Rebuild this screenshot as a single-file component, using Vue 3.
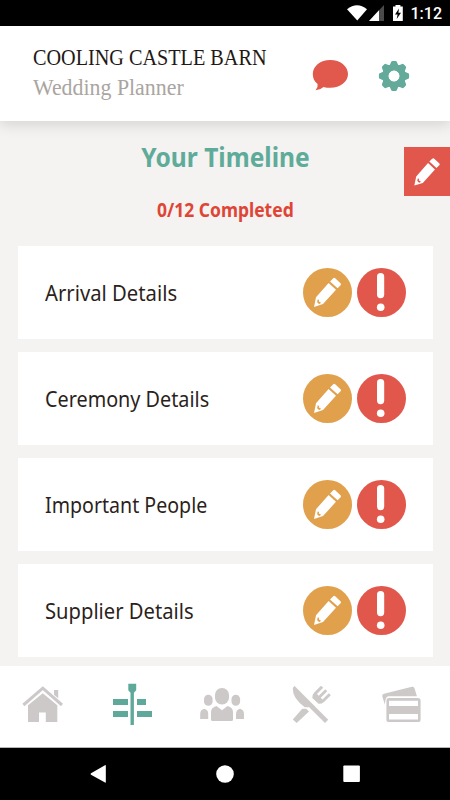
<script setup>
const tasks = [
  { name: 'Arrival Details', stretch: 0.921 },
  { name: 'Ceremony Details', stretch: 0.9 },
  { name: 'Important People', stretch: 0.891 },
  { name: 'Supplier Details', stretch: 0.918 },
]
const teeth = [0, 45, 90, 135, 180, 225, 270, 315]
</script>

<template>
  <div class="screen">
    <svg class="defs" width="0" height="0" aria-hidden="true">
      <symbol id="pencil" viewBox="0 0 49 49">
        <path fill="#fff" d="M30 10.5Q31 9.2 32.2 10.3L37.5 15.2Q38.7 16.3 37.6 17.3L34.6 20.3L27 13.4Z" />
        <path fill="#fff" fill-rule="evenodd" d="M25.6 14.9L33 21.8L20 36.1L11 39L13 29.2ZM14.6 31.5L14.2 34.2Q15 36 17.1 36L17.7 34L15.9 33.7L16 31.8Z" />
      </symbol>
    </svg>

    <div class="status">
      <svg width="112" height="26" viewBox="338 0 112 26" aria-hidden="true">
        <path fill="#fff" d="M347 9.2Q357 1.2 367 9.2L357.3 20.5Z" />
        <path fill="#4b4b4b" d="M384 5V21H369Z" />
        <path fill="#fff" d="M379 10.2V21H369Z" />
        <path fill="#fff" d="M395.5 5V6.5H393V21H402.8V6.5H400.4V5Z" />
        <path fill="#000" d="M399 8.5L395 14.6H397.6L396.7 19L401 12.7H398.4Z" />
      </svg>
      <span class="clock">1:12</span>
    </div>

    <header class="header">
      <div class="brand">
        <div class="venue"><span>COOLING CASTLE BARN</span></div>
        <div class="role"><span>Wedding Planner</span></div>
      </div>
      <svg class="chat" width="36" height="32" viewBox="312 59 36 32">
        <path fill="#e1584c" d="M330.3 60C340.2 60 348 66.2 348 74S340.2 87.8 330.3 87.8Q326.6 87.8 323.5 86.9Q320.2 90 315.6 90.3Q318.3 87.4 317.6 84.1C314.4 81.7 312.8 78 312.8 74C312.8 66.2 320.4 60 330.3 60Z" />
      </svg>
      <svg width="32" height="32" viewBox="-16 -16 32 32">
        <g fill="#63aa9b">
          <path v-for="a in teeth" :key="a" :transform="`rotate(${a})`" d="M-5 -9L-3 -13.7Q-2.6 -15.1 -1.4 -15.1H1.4Q2.6 -15.1 3 -13.7L5 -9Z" />
        </g>
        <circle r="8.6" fill="none" stroke="#63aa9b" stroke-width="6.4" />
        <circle r="5.3" fill="#fff" />
      </svg>
    </header>

    <main class="content">
      <h1 class="title"><span>Your Timeline</span></h1>
      <p class="progress"><span>0/12 Completed</span></p>
      <button class="edit-tab" aria-label="Edit"><svg width="46" height="46"><use href="#pencil" /></svg></button>
      <ul class="list">
        <li v-for="task in tasks" :key="task.name" class="card">
          <span class="label" :style="{ transform: `scaleX(${task.stretch})` }">{{ task.name }}</span>
          <svg width="49" height="49" viewBox="0 0 49 49">
            <circle cx="24.5" cy="24.5" r="24.5" fill="#e0a04c" />
            <use href="#pencil" width="49" height="49" />
          </svg>
          <svg width="49" height="49" viewBox="0 0 49 49">
            <circle cx="24.5" cy="24.5" r="24.5" fill="#e1574c" />
            <rect x="20" y="5" width="7.2" height="25.2" rx="3.6" fill="#fff" />
            <circle cx="23.7" cy="39.3" r="3.8" fill="#fff" />
          </svg>
        </li>
      </ul>
    </main>

    <nav class="tabs">
      <svg viewBox="0 666 90 81" fill="#cdc9c9">
        <path fill="none" stroke="#cdc9c9" stroke-width="3" d="M23.4 705L42.8 688.2L62 705" />
        <path d="M54 690H58.2V698.3L54 694.7ZM42.8 693.2L57.3 705.2V722H45.8V712.4H39V722H28V705.2Z" />
      </svg>
      <svg viewBox="90 666 90 81" fill="#5fa99a">
        <path d="M128.3 683.7H136.2V690.3L133.9 692.8V725H130.5V692.8L128.3 690.3ZM113 699H128V705H113ZM137 699H146V705H137ZM113 711H128V717H113ZM137 711H152V717H137Z" />
      </svg>
      <svg viewBox="180 666 90 81" fill="#cdc9c9">
        <rect x="215" y="688" width="14" height="16.5" rx="6.8" />
        <rect x="204" y="694.8" width="8.6" height="11" rx="4.3" />
        <rect x="231.5" y="694.8" width="8.6" height="11" rx="4.3" />
        <path d="M200.2 719V714Q200.2 709.5 204.3 708.7Q208.2 709.8 208.2 713.5V719ZM236 719V714Q236 709.8 240 708.7Q244 709.5 244 714V719ZM211 719.5V712Q211 707.5 216.5 706L222 710.2L227.5 706Q233 707.5 233 712V719.5Q233 721 231.5 721H212.5Q211 721 211 719.5Z" />
      </svg>
      <svg viewBox="270 666 90 81" fill="#cdc9c9">
        <path d="M294.6 686L328.2 719.7L325 723L309.2 707.2H304.8Q292.8 698.5 292.8 689Q292.8 687 294.6 686Z" />
        <path d="M302.2 708.8H306.2L309 711.5L296.7 723L292.8 719.5Z" />
        <path d="M312.3 698Q312.1 694.7 314.2 692.5L321 685.7L323.2 687.7L317 694L318.8 695.8L325.3 689.3L327.2 691.2L320.7 697.7L322.5 699.5L328.8 693.3L330.8 695.3L324 702Q321.5 704.2 318.5 703.8Z" />
      </svg>
      <svg viewBox="360 666 90 81" fill="#cdc9c9">
        <path d="M382.3 696.6Q381.8 694.4 384 693.8L412 686.8Q414 686.3 414.6 688.4L416.9 696.2H388.2Q385.1 697 384.9 704.8Z" />
        <path fill-rule="evenodd" d="M389 698H418Q420.6 698 420.6 700.6V719.4Q420.6 722 418 722H389Q386.4 722 386.4 719.4V700.6Q386.4 698 389 698ZM389 700.8V706H418V700.8ZM389 714V719.5H418V714Z" />
      </svg>
    </nav>

    <footer class="system">
      <svg width="450" height="52" viewBox="0 748 450 52" fill="#fff">
        <path d="M105.8 765.5V782.3Q105.8 783 105 782.6L91 774.7Q90 774 91 773.3L105 765.2Q105.8 764.8 105.8 765.5Z" />
        <circle cx="225" cy="774" r="8.8" />
        <rect x="343.3" y="765.5" width="16.6" height="16.4" rx="1" />
      </svg>
    </footer>
  </div>
</template>

<style>
body { margin: 0; }
</style>

<style scoped>
.screen {
  width: 450px;
  height: 800px;
  display: flex;
  flex-direction: column;
  overflow: hidden;
  background: #f4f3f1;
  font-family: "Noto Sans", sans-serif;
}
.defs { position: absolute; }
svg { display: block; flex: none; }
span { display: inline-block; white-space: nowrap; }
.status {
  height: 26px;
  flex: none;
  display: flex;
  justify-content: flex-end;
  background: #000;
  position: relative;
}
.clock {
  position: absolute;
  right: 8px;
  top: 4px;
  font: 500 16px/20px Roboto, sans-serif;
  color: #fff;
}
.header {
  height: 95px;
  box-sizing: border-box;
  flex: none;
  display: flex;
  align-items: flex-start;
  padding: 17px 40px 0 33px;
  background: #fff;
  box-shadow: 0 3px 14px rgba(0, 0, 0, 0.14);
  z-index: 1;
}
.header svg { margin-top: 17px; }
.header .chat { margin: 16px 30px 0 0; }
.brand { flex: 1; font-family: "Liberation Serif", serif; }
.venue { font-size: 22.5px; line-height: 29px; color: #231815; }
.venue span { transform: scaleX(0.898); transform-origin: left; }
.role { font-size: 22.5px; line-height: 32px; color: #aaa5a0; }
.role span { transform: scaleX(0.972); transform-origin: left; }
.content {
  flex: none;
  height: 545px;
  position: relative;
  overflow: hidden;
  text-align: center;
}
.title {
  margin: 18px 0 0;
  font-size: 27px;
  line-height: 36px;
  font-weight: 700;
  color: #5fab9a;
}
.title span { transform: scaleX(0.91); }
.progress {
  margin: 22px 0 0;
  font-size: 19px;
  line-height: 26px;
  font-weight: 700;
  color: #df4536;
}
.progress span { transform: scaleX(0.92); }
.edit-tab {
  position: absolute;
  right: 0;
  top: 26px;
  width: 46px;
  height: 49px;
  padding: 0;
  border: 0;
  background: #e1574c;
}
.list {
  list-style: none;
  margin: 23px 17px 0 17.5px;
  padding: 0;
  display: flex;
  flex-direction: column;
  gap: 13px;
}
.card {
  height: 93px;
  box-sizing: border-box;
  display: flex;
  align-items: center;
  gap: 5px;
  padding: 0 27px;
  background: #fff;
}
.label {
  flex: 1;
  padding-bottom: 2px;
  text-align: left;
  font-size: 22px;
  line-height: 30px;
  color: #2c1f1c;
  transform-origin: left;
}
.tabs {
  height: 82px;
  box-sizing: border-box;
  flex: none;
  display: grid;
  grid-template-columns: repeat(5, 1fr);
  border-bottom: 1px solid #b5b5b5;
  background: #fff;
}
.tabs svg { width: 90px; height: 81px; }
.system { height: 52px; background: #000; }
</style>
